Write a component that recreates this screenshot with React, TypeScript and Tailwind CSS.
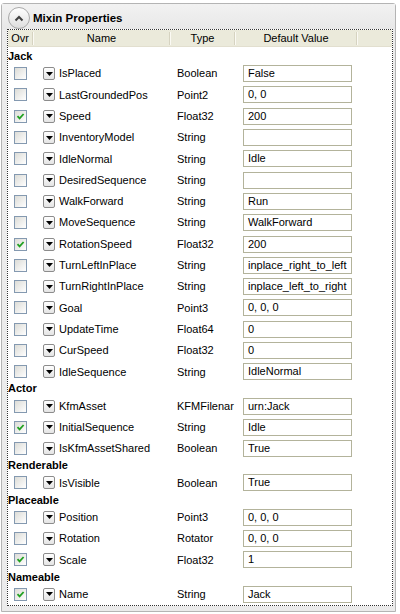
import React from 'react'

type Prop = [string, string, string, boolean]

const groups: { name: string; props: Prop[] }[] = [
  {
    name: 'Jack',
    props: [
      ['IsPlaced', 'Boolean', 'False', false],
      ['LastGroundedPos', 'Point2', '0, 0', false],
      ['Speed', 'Float32', '200', true],
      ['InventoryModel', 'String', '', false],
      ['IdleNormal', 'String', 'Idle', false],
      ['DesiredSequence', 'String', '', false],
      ['WalkForward', 'String', 'Run', false],
      ['MoveSequence', 'String', 'WalkForward', false],
      ['RotationSpeed', 'Float32', '200', true],
      ['TurnLeftInPlace', 'String', 'inplace_right_to_left', false],
      ['TurnRightInPlace', 'String', 'inplace_left_to_right', false],
      ['Goal', 'Point3', '0, 0, 0', false],
      ['UpdateTime', 'Float64', '0', false],
      ['CurSpeed', 'Float32', '0', false],
      ['IdleSequence', 'String', 'IdleNormal', false],
    ],
  },
  {
    name: 'Actor',
    props: [
      ['KfmAsset', 'KFMFilenar', 'urn:Jack', false],
      ['InitialSequence', 'String', 'Idle', true],
      ['IsKfmAssetShared', 'Boolean', 'True', false],
    ],
  },
  {
    name: 'Renderable',
    props: [['IsVisible', 'Boolean', 'True', false]],
  },
  {
    name: 'Placeable',
    props: [
      ['Position', 'Point3', '0, 0, 0', false],
      ['Rotation', 'Rotator', '0, 0, 0', false],
      ['Scale', 'Float32', '1', true],
    ],
  },
  {
    name: 'Nameable',
    props: [['Name', 'String', 'Jack', true]],
  },
]

function Checkbox({ checked }: { checked: boolean }) {
  return (
    <div className="w-[13px] h-[13px] border border-[#8499b0] bg-gradient-to-br from-[#dcdcd7] to-white flex items-center justify-center">
      {checked && (
        <svg width="9" height="9" viewBox="0 0 9 9">
          <path d="M1.5 4.2 L3.6 6.4 L7.6 2" fill="none" stroke="#21a121" strokeWidth="1.8" />
        </svg>
      )}
    </div>
  )
}

function DropButton() {
  return (
    <div className="w-[12px] h-[13px] rounded-[2px] border border-[#8c8c8c] bg-gradient-to-b from-white to-[#e4e4e4] flex items-center justify-center">
      <svg width="7" height="4" viewBox="0 0 7 4">
        <path d="M0 0 H7 L3.5 4 Z" fill="#000" />
      </svg>
    </div>
  )
}

function Divider() {
  return (
    <div className="flex h-[13px] self-center">
      <div className="w-px bg-[#d6d3c1]" />
      <div className="w-px bg-[#fbfaf4]" />
    </div>
  )
}

export default function App() {
  return (
    <div className="w-[400px] h-[614px] bg-white pt-[3px] pl-[1px] font-['Liberation_Sans',Arial,sans-serif] text-[11px] text-black">
      <div className="w-[395px] h-[609px] border border-[#b4b4b4] rounded-t-[3px] bg-[#ebebeb] flex flex-col">
        <div className="h-[25px] flex items-start pt-[3px] pl-[6px] gap-[3px] bg-gradient-to-b from-[#f2f2f2] to-[#e8e8e8]">
          <div className="w-[22px] h-[22px] rounded-full border border-[#a9a9a9] bg-gradient-to-b from-white to-[#dedede] flex items-center justify-center shrink-0">
            <svg width="10" height="7" viewBox="0 0 10 7">
              <path d="M1.5 5.5 L5 2 L8.5 5.5" fill="none" stroke="#404040" strokeWidth="2" />
            </svg>
          </div>
          <span className="font-bold text-[11.5px] leading-[22px]">Mixin Properties</span>
        </div>
        <div className="ml-[5px] w-[386px] border border-dotted border-[#333] bg-white flex flex-col">
          <div className="h-[17px] bg-[#ebeadb] border-b border-[#e2dfcf] flex items-center shrink-0">
            <div className="w-[24px] text-center">Ovr</div>
            <Divider />
            <div className="w-[135px] text-center">Name</div>
            <Divider />
            <div className="w-[63px] text-center">Type</div>
            <Divider />
            <div className="w-[120px] text-center">Default Value</div>
            <Divider />
          </div>
          <div className="h-[3px] shrink-0" />
          {groups.map((g) => (
            <div key={g.name} className="flex flex-col">
              <div className="h-[13px] leading-[13px] font-bold">{g.name}</div>
              {g.props.map(([name, type, value, checked]) => (
                <div key={name} className="h-[21.3px] flex items-center">
                  <div className="w-[25px] flex justify-center">
                    <Checkbox checked={checked} />
                  </div>
                  <div className="w-[137px] flex items-center pl-[10px] gap-[4px]">
                    <DropButton />
                    <span className="whitespace-nowrap">{name}</span>
                  </div>
                  <div className="w-[65px] pl-[7px] whitespace-nowrap">{type}</div>
                  <div className="w-[122px] pl-[8px]">
                    <div className="w-[109px] h-[17px] border border-[#b3b39b] bg-white px-[4px] leading-[15px] overflow-hidden whitespace-nowrap">
                      {value}
                    </div>
                  </div>
                </div>
              ))}
            </div>
          ))}
        </div>
      </div>
    </div>
  )
}
